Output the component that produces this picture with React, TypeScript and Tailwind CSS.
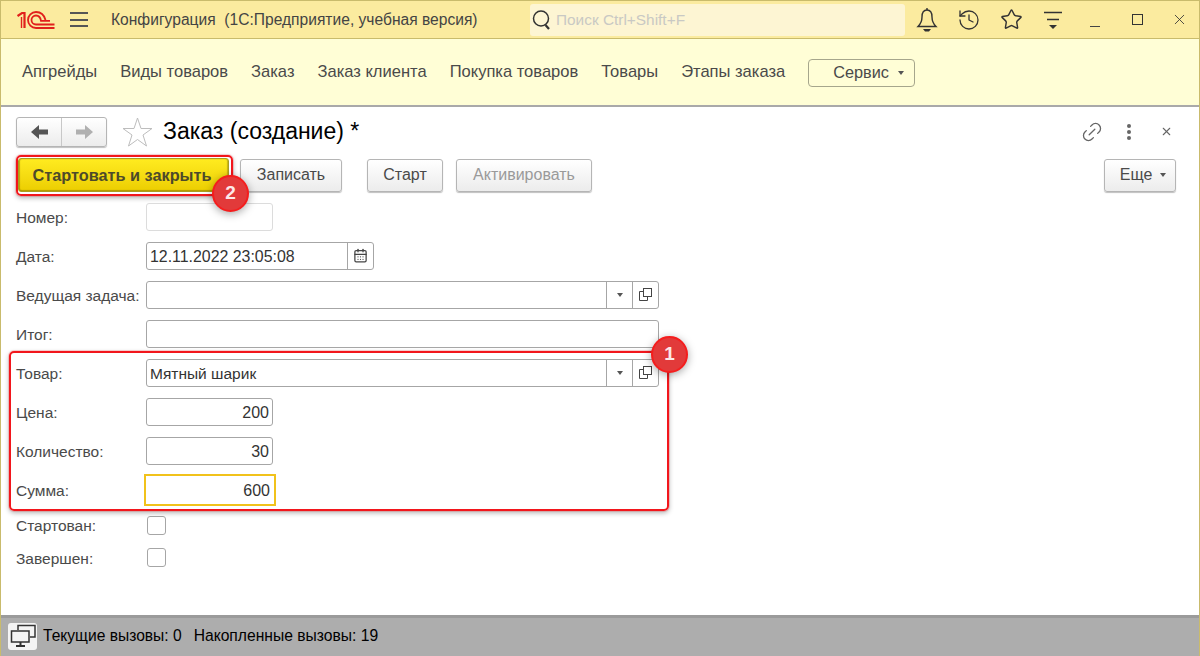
import { CalendarDays, History, Link2, Star, X } from 'lucide-react';

const sections = ['Апгрейды', 'Виды товаров', 'Заказ', 'Заказ клиента', 'Покупка товаров', 'Товары', 'Этапы заказа'];

function Caret({ className = '' }: { className?: string }) {
  return <span className={`h-0 w-0 border-x-[3.5px] border-t-[4px] border-x-transparent border-t-[#555] ${className}`} />;
}

function Logo() {
  return (
    <svg width="38" height="20" viewBox="0 0 38 20" fill="none" stroke="#e1201c" strokeWidth="1.8">
      <path d="M0.5 6 L5 3 H7.5 V18" strokeWidth="2.2" />
      <path d="M4.5 7 V18" strokeWidth="1.4" />
      <path d="M37.5 18 H19 A8 8 0 1 1 19 2 C24 2 27 4.5 28.5 10" />
      <path d="M37.5 14.5 H19 A4.5 4.5 0 1 1 19 5.5 C21.5 5.5 23.5 7.5 24 10.8 H33" />
    </svg>
  );
}

function BellIcon() {
  return (
    <svg width="24" height="26" viewBox="0 0 24 26" fill="none" stroke="#333" strokeWidth="1.4">
      <path d="M12 3 C8 3 7 6.5 7 10 C7 14 5.5 17 3 19.5 H21 C18.5 17 17 14 17 10 C17 6.5 16 3 12 3 Z" />
      <path d="M12 1 V3" />
      <path d="M8 22 H16 L14 24.5 H10 Z" fill="#333" stroke="none" />
    </svg>
  );
}

function OpenIcon() {
  return (
    <svg width="13" height="13" viewBox="0 0 13 13" fill="none" stroke="#444" strokeWidth="1">
      <path d="M4.5 3.5 H0.5 V12.5 H8.5 V9" />
      <rect x="4.5" y="0.5" width="8" height="8" />
    </svg>
  );
}

function FilterIcon() {
  return (
    <svg width="18" height="20" viewBox="0 0 18 20" fill="none" stroke="#333" strokeWidth="1.3">
      <path d="M0 2.5 H18 M3 9.5 H15" />
      <path d="M5 15 H13 L9 19 Z" fill="#333" stroke="none" />
    </svg>
  );
}

function MonitorsIcon() {
  return (
    <svg width="26" height="24" viewBox="0 0 26 24" fill="none" stroke="#333" strokeWidth="1.5">
      <path d="M8 6 V1.5 H25 V13 H20" />
      <rect x="1.5" y="7" width="17.5" height="11" fill="#f4f4f4" />
      <path d="M6 22 H15 M10.5 18 V22" strokeWidth="2" />
    </svg>
  );
}

function BlockArrow({ color, flip = false }: { color: string; flip?: boolean }) {
  return (
    <svg width="17" height="14" viewBox="0 0 17 14" fill={color} className={flip ? 'rotate-180' : ''}>
      <path d="M0 7 L8 0 V4.5 H17 V9.5 H8 V14 Z" />
    </svg>
  );
}

function Field({ label, children, height = 'h-[39px]' }: { label: string; children: React.ReactNode; height?: string }) {
  return (
    <div className={`flex items-center ${height}`}>
      <span className="w-[130px] shrink-0 pt-[2px] text-[#4a4a4a]">{label}</span>
      {children}
    </div>
  );
}

function PickerInput({ value = '' }: { value?: string }) {
  return (
    <div className="flex h-[28px] w-[513px] items-stretch rounded-[3px] border border-[#a6a6a6] bg-white">
      <span className="flex-1 pl-[3px] pt-px leading-[26px] text-[#333]">{value}</span>
      <span className="flex w-[26px] items-center justify-center border-l border-[#a6a6a6]"><Caret /></span>
      <span className="flex w-[26px] items-center justify-center border-l border-[#a6a6a6]"><OpenIcon /></span>
    </div>
  );
}

function NumberInput({ value }: { value: string }) {
  return (
    <div className="h-[28px] w-[127px] rounded-[3px] border border-[#a6a6a6] bg-white pr-[3px] pt-px text-right text-[16px] leading-[26px] text-[#333]">
      {value}
    </div>
  );
}

function Button({ children, muted = false, className = '' }: { children: React.ReactNode; muted?: boolean; className?: string }) {
  return (
    <div
      className={`flex h-[33px] items-center justify-center rounded-[3px] border border-[#b5b5b5] bg-linear-to-b from-white to-[#ececec] text-[16px] shadow-[0_1px_1px_rgba(0,0,0,0.25)] ${muted ? 'text-[#9a9a9a]' : 'text-[#4a4a4a]'} ${className}`}
    >
      {children}
    </div>
  );
}

function Badge({ n, className }: { n: number; className: string }) {
  return (
    <div className={`absolute flex size-[37px] items-center justify-center rounded-full border-2 border-[#f51d1d] bg-[#e23a3a] text-[19px] font-bold text-[#fde8e8] shadow-[0_2px_8px_rgba(0,0,0,0.35)] ${className}`}>
      {n}
    </div>
  );
}

function TopIcon({ children }: { children: React.ReactNode }) {
  return <div className="flex w-[42px] shrink-0 items-center justify-center">{children}</div>;
}

export default function App() {
  return (
    <div className="relative flex h-[656px] w-[1200px] flex-col overflow-hidden border-x border-[#c9bb6c] bg-white font-['Liberation_Sans',Arial,sans-serif] text-[15.5px]">
      {/* title bar */}
      <div className="flex h-[39px] shrink-0 items-center border-y border-[#c9bb6c] bg-[#fbeb9f]">
        <div className="ml-[16px] flex shrink-0"><Logo /></div>
        <div className="ml-[15px] flex h-[15px] w-[18px] shrink-0 flex-col justify-between">
          <span className="h-[2px] bg-[#555]" />
          <span className="h-[2px] bg-[#555]" />
          <span className="h-[2px] bg-[#555]" />
        </div>
        <span className="ml-[23px] w-[419px] shrink-0 text-[15.6px] text-[#444]">Конфигурация&nbsp; (1С:Предприятие, учебная версия)</span>
        <div className="flex h-[32px] w-[375px] shrink-0 items-center rounded-[3px] bg-[#fdf5d3] pl-[2px]">
          <svg width="20" height="22" viewBox="0 0 20 22" fill="none" stroke="#333" strokeWidth="1.5">
            <circle cx="9" cy="9.5" r="7.5" />
            <path d="M13.5 16 L17 20" strokeWidth="2.2" />
          </svg>
          <span className="ml-[4px] text-[15.4px] text-[#c9c9c4]">Поиск Ctrl+Shift+F</span>
        </div>
        <div className="ml-[1px] flex shrink-0">
          <TopIcon><BellIcon /></TopIcon>
          <TopIcon><History size={24} strokeWidth={1.3} color="#333" /></TopIcon>
          <TopIcon><Star size={23} strokeWidth={1.5} color="#333" /></TopIcon>
          <TopIcon><FilterIcon /></TopIcon>
          <TopIcon><span className="mt-[13px] h-[1px] w-[10px] bg-[#444]" /></TopIcon>
          <TopIcon><span className="h-[11px] w-[11px] border-[1.5px] border-[#333]" /></TopIcon>
          <TopIcon><X size={17} strokeWidth={1.2} color="#333" /></TopIcon>
        </div>
      </div>

      {/* sections */}
      <div className="flex h-[68px] shrink-0 items-center border-b-2 border-[#a9a9a9] bg-[#fffed6] pl-[21px] pt-[1px] text-[16.55px] text-[#4a4a4a]">
        <div className="flex gap-[23px]">
          {sections.map((name) => (
            <span key={name}>{name}</span>
          ))}
        </div>
        <div className="ml-[23px] flex h-[28px] w-[107px] items-center rounded-[4px] border border-[#a6a68c] pl-[24px] text-[16.3px]">
          Сервис
          <Caret className="ml-[9px]" />
        </div>
      </div>

      {/* form header */}
      <div className="flex h-[49px] shrink-0 items-center pl-[15px] pr-[26px]">
        <div className="flex h-[30px] w-[91px] rounded-[3px] border border-[#b5b5b5] bg-linear-to-b from-white to-[#ececec] shadow-[0_1px_1px_rgba(0,0,0,0.25)]">
          <span className="flex flex-1 items-center justify-center border-r border-[#c8c8c8]"><BlockArrow color="#555" /></span>
          <span className="flex w-[44px] items-center justify-center"><BlockArrow color="#b0b0b0" flip /></span>
        </div>
        <svg className="ml-[15px]" width="31" height="30" viewBox="0 0 31 30" fill="none" stroke="#bdbdbd" strokeWidth="1">
          <path d="M15.5 1 L19 11.5 H30 L21 18 L24.5 29 L15.5 22.5 L6.5 29 L10 18 L1 11.5 H12 Z" />
        </svg>
        <span className="ml-[10px] text-[23px] text-black">Заказ (создание) *</span>
        <Link2 className="ml-auto -rotate-45" size={24} strokeWidth={1.3} color="#666" />
        <div className="ml-[23px] flex flex-col gap-[2px]">
          <span className="size-[4px] rounded-full bg-[#666]" />
          <span className="size-[4px] rounded-full bg-[#666]" />
          <span className="size-[4px] rounded-full bg-[#666]" />
        </div>
        <X className="ml-[29px]" size={13} strokeWidth={2} color="#666" />
      </div>

      {/* command bar */}
      <div className="flex h-[38px] shrink-0 items-center pl-[17px] pr-[23px]">
        <div className="flex h-[34px] w-[211px] items-center justify-center rounded-[3px] border border-[#a99e20] bg-linear-to-b from-[#ffeb1f] to-[#ecce00] pr-[3px] text-[16.3px] font-bold text-[#4d4a2a] shadow-[inset_1px_0_1px_rgba(120,100,0,0.45),inset_-1px_0_1px_rgba(120,100,0,0.35),inset_0_-1px_1px_rgba(120,100,0,0.45)]">
          Стартовать и закрыть
        </div>
        <Button className="ml-[11px] w-[102px]">Записать</Button>
        <Button className="ml-[25px] w-[76px]">Старт</Button>
        <Button muted className="ml-[13px] w-[136px]">Активировать</Button>
        <Button className="ml-auto w-[72px] gap-[8px] pl-[6px]">Еще<Caret /></Button>
      </div>

      {/* form */}
      <div className="flex flex-1 flex-col px-[15px] pt-[3px]">
        <Field label="Номер:">
          <div className="h-[28px] w-[127px] rounded-[3px] border border-[#dcdcdc] bg-white" />
        </Field>
        <Field label="Дата:">
          <div className="flex h-[28px] w-[228px] rounded-[3px] border border-[#a6a6a6]">
            <span className="flex-1 pl-[3px] pt-px text-[15.9px] leading-[26px] text-[#333]">12.11.2022 23:05:08</span>
            <span className="flex w-[26px] items-center justify-center border-l border-[#a6a6a6]"><CalendarDays size={15} strokeWidth={2} color="#444" /></span>
          </div>
        </Field>
        <Field label="Ведущая задача:"><PickerInput /></Field>
        <Field label="Итог:">
          <div className="h-[28px] w-[513px] rounded-[3px] border border-[#a6a6a6]" />
        </Field>
        <Field label="Товар:"><PickerInput value="Мятный шарик" /></Field>
        <Field label="Цена:"><NumberInput value="200" /></Field>
        <Field label="Количество:"><NumberInput value="30" /></Field>
        <Field label="Сумма:">
          <div className="-ml-[2px] h-[32px] w-[132px] border-2 border-[#f1c21b] pr-[4px] pt-px text-right text-[16px] leading-[28px] text-[#333]">600</div>
        </Field>
        <Field label="Стартован:" height="h-[32px]">
          <span className="ml-[1px] size-[19px] rounded-[3px] border border-[#a6a6a6]" />
        </Field>
        <Field label="Завершен:" height="h-[33px]">
          <span className="ml-[1px] size-[19px] rounded-[3px] border border-[#a6a6a6]" />
        </Field>
      </div>

      {/* status bar */}
      <div className="flex h-[41px] shrink-0 items-center border-t-[3px] border-[#9b9b9b] bg-[#adadad] pb-[2px] pl-[7px] text-black">
        <div className="flex h-[27px] w-[29px] items-center justify-center rounded-[3px] bg-[#f4f4f4]"><MonitorsIcon /></div>
        <span className="ml-[6px] text-[15.6px]">Текущие вызовы: 0</span>
        <span className="ml-[12px] text-[15.65px]">Накопленные вызовы: 19</span>
      </div>

      {/* annotations */}
      <div className="absolute left-[8px] top-[351px] h-[160px] w-[660px] rounded-[5px] border-2 border-[#f2161c] shadow-[0_0_0_1px_rgba(255,0,0,0.15),0_2px_5px_rgba(0,0,0,0.3)]" />
      <div className="absolute left-[15px] top-[155px] h-[41px] w-[217px] rounded-[5px] border-2 border-[#f2161c] shadow-[0_0_0_1px_rgba(255,0,0,0.15),0_2px_5px_rgba(0,0,0,0.3)]" />
      <Badge n={1} className="left-[650px] top-[336px]" />
      <Badge n={2} className="left-[211px] top-[175px]" />
    </div>
  );
}
